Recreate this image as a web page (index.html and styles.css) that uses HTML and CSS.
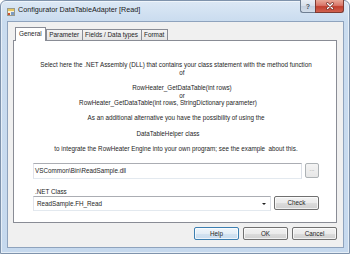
FILE: index.html
```html
<!DOCTYPE html>
<html>
<head>
<meta charset="utf-8">
<link rel="stylesheet" href="styles.css">
</head>
<body>
<div class="window">
  <div class="titlebar">
    <svg class="appicon" viewBox="0 0 8 8" width="8" height="8">
      <rect x="0.5" y="0.5" width="7" height="7" fill="#f4f0dc" stroke="#9a9a8a" stroke-width="1"/>
      <rect x="1" y="1" width="6" height="2" fill="#e6c660"/>
      <rect x="1" y="5" width="2" height="2" fill="#d0502c"/>
      <rect x="4" y="4" width="3" height="3" fill="#7d9cc4"/>
    </svg>
    <span class="title">Configurator DataTableAdapter [Read]</span>
    <div class="caption">
      <div class="cbtn help">?</div>
      <div class="cbtn close">
        <svg viewBox="0 0 10 8" width="10" height="8">
          <path d="M2.5 1.5 L7.5 6.5 M7.5 1.5 L2.5 6.5" stroke="#6b2a22" stroke-width="2.6" stroke-linecap="round"/>
          <path d="M2.5 1.5 L7.5 6.5 M7.5 1.5 L2.5 6.5" stroke="#ffffff" stroke-width="1.4" stroke-linecap="round"/>
        </svg>
      </div>
    </div>
  </div>
  <div class="client">
    <div class="tabs">
      <div class="tab active">General</div>
      <div class="tab">Parameter</div>
      <div class="tab">Fields / Data types</div>
      <div class="tab">Format</div>
    </div>
    <div class="panel">
      <div class="desc d1">
        <div>Select here the .NET Assembly (DLL) that contains your class statement with the method function</div>
        <div class="sh-r">of</div>
      </div>
      <div class="desc d2">
        <div class="sh-r">RowHeater_GetDataTable(int rows)</div>
        <div class="sh-r">or</div>
        <div class="sh-l">RowHeater_GetDataTable(int rows, StringDictionary parameter)</div>
      </div>
      <div class="desc d2b"><div>As an additional alternative you have the possibility of using the</div></div>
      <div class="desc d3"><div class="sh-l">DataTableHelper class</div></div>
      <div class="desc d4"><div>to integrate the RowHeater Engine into your own program; see the example&nbsp; about this.</div></div>
      <div class="file-row">
        <div class="textbox">VSCommon\Bin\ReadSample.dll</div>
        <div class="browse">...</div>
      </div>
      <div class="label">.NET Class</div>
      <div class="class-row">
        <div class="combo"><span class="combo-text">ReadSample.FH_Read</span><span class="arrow"></span></div>
        <div class="btn check">Check</div>
      </div>
    </div>
    <div class="footer">
      <div class="btn focus">Help</div>
      <div class="btn">OK</div>
      <div class="btn">Cancel</div>
    </div>
  </div>
</div>
</body>
</html>
```
FILE: styles.css
```css
html, body {
  margin: 0;
  padding: 0;
}
body {
  width: 350px;
  height: 254px;
  overflow: hidden;
  background: #ffffff;
  font-family: "Liberation Sans", Arial, sans-serif;
  color: #1e1e1e;
}
.window {
  box-sizing: border-box;
  width: 350px;
  height: 254px;
  border: 1px solid #7f93ac;
  border-radius: 6px 6px 0 0;
  background: linear-gradient(to bottom, #dce8f5 0px, #cadcef 20px, #c6d9ee 100%);
  box-shadow: inset 0 0 0 1px rgba(255,255,255,0.55);
  display: flex;
  flex-direction: column;
}
.titlebar {
  height: 20px;
  flex: none;
  display: flex;
  align-items: flex-start;
}
.appicon {
  margin: 7px 3px 0 6px;
  flex: none;
}
.title {
  font-size: 7.2px;
  line-height: 8px;
  margin-top: 5px;
  color: #1a1a1a;
  white-space: nowrap;
}
.caption {
  margin-left: auto;
  margin-right: 5px;
  margin-top: -1px;
  display: flex;
}
.cbtn {
  box-sizing: border-box;
  height: 13px;
  border: 1px solid #6f7e92;
  border-top: none;
  display: flex;
  align-items: center;
  justify-content: center;
}
.cbtn.help {
  width: 15px;
  border-right: none;
  border-radius: 0 0 0 3px;
  background: linear-gradient(to bottom, #e9eef5 0%, #d6dfeb 50%, #c3cfdf 51%, #d3dde9 100%);
  font-size: 7px;
  font-weight: bold;
  color: #4a5563;
}
.cbtn.close {
  width: 29px;
  border-color: #7d3a32;
  border-radius: 0 0 3px 0;
  background: linear-gradient(to bottom, #e9a897 0%, #d9776a 45%, #c2402f 55%, #d0614f 100%);
}
.client {
  flex: 1;
  box-sizing: border-box;
  margin: 0 5px 5px 6px;
  background: #f0f0f0;
  border: 1px solid #8fa3bd;
  padding: 5px 6px 7px 5px;
  display: flex;
  flex-direction: column;
}
.tabs {
  flex: none;
  height: 13px;
  display: flex;
  align-items: flex-end;
  padding-left: 2px;
}
.tab {
  box-sizing: border-box;
  height: 11px;
  line-height: 10px;
  border: 1px solid #898c95;
  border-bottom: none;
  padding: 0 2.5px;
  margin-left: -1px;
  font-size: 6.4px;
  white-space: nowrap;
  background: linear-gradient(to bottom, #f4f4f4, #e4e4e4);
}
.tab.active {
  height: 14px;
  line-height: 12px;
  margin-left: 0;
  margin-right: 1px;
  margin-bottom: -1px;
  padding: 0 3px;
  background: #ffffff;
  position: relative;
  z-index: 2;
}
.panel {
  flex: 1;
  box-sizing: border-box;
  background: #ffffff;
  border: 1px solid #898c95;
  padding: 0 17px 0 19px;
  display: flex;
  flex-direction: column;
}
.desc {
  text-align: center;
  font-size: 6.3px;
  line-height: 8px;
  white-space: nowrap;
}
.d1 { margin-top: 20px; }
.d2 { margin-top: 7px; line-height: 7.5px; }
.d2b { margin-top: 7.5px; }
.d3 { margin-top: 8px; }
.d4 { margin-top: 7px; }
.sh-r { padding-left: 12px; }
.sh-l { padding-right: 16px; }
.file-row {
  display: flex;
  gap: 3px;
  margin-top: 10px;
}
.textbox {
  flex: 1;
  box-sizing: border-box;
  height: 16px;
  border: 1px solid;
  border-color: #abadb3 #dbdfe6 #e3e9ef #e2e3ea;
  font-size: 6.3px;
  line-height: 14px;
  padding-left: 1px;
  white-space: nowrap;
}
.browse {
  box-sizing: border-box;
  width: 14px;
  height: 15px;
  border: 1px solid #adb2b5;
  border-radius: 2px;
  background: linear-gradient(to bottom, #f4f4f4, #e6e6e6);
  font-size: 6px;
  line-height: 11px;
  text-align: center;
  color: #8a8a8a;
}
.label {
  font-size: 6.3px;
  line-height: 8px;
  margin-top: 9px;
  padding-left: 2px;
}
.class-row {
  display: flex;
  gap: 3px;
  align-items: flex-start;
}
.combo {
  box-sizing: border-box;
  width: 238px;
  height: 15px;
  border: 1px solid;
  border-color: #abadb3 #dbdfe6 #e3e9ef #e2e3ea;
  display: flex;
  align-items: center;
  padding: 0 3px 0 3px;
  font-size: 6.3px;
}
.combo-text {
  flex: 1;
  white-space: nowrap;
}
.arrow {
  width: 0;
  height: 0;
  border-left: 2px solid transparent;
  border-right: 2px solid transparent;
  border-top: 2.5px solid #1e1e1e;
  margin-right: 1px;
}
.btn {
  box-sizing: border-box;
  width: 45px;
  height: 13px;
  border: 1px solid #707070;
  border-radius: 2px;
  background: linear-gradient(to bottom, #f2f2f2 0%, #ebebeb 50%, #dddddd 51%, #cfcfcf 100%);
  box-shadow: inset 0 0 0 1px rgba(255,255,255,0.7);
  font-size: 6.3px;
  line-height: 11px;
  text-align: center;
}
.btn.check {
  height: 14px;
  line-height: 12px;
}
.btn.focus {
  border-color: #3c7fb1;
  background: linear-gradient(to bottom, #f0f6fb 0%, #e4eef7 50%, #d3e3f1 51%, #c9dcef 100%);
}
.footer {
  flex: none;
  display: flex;
  justify-content: flex-end;
  gap: 4px;
  margin-top: 4px;
}
```
